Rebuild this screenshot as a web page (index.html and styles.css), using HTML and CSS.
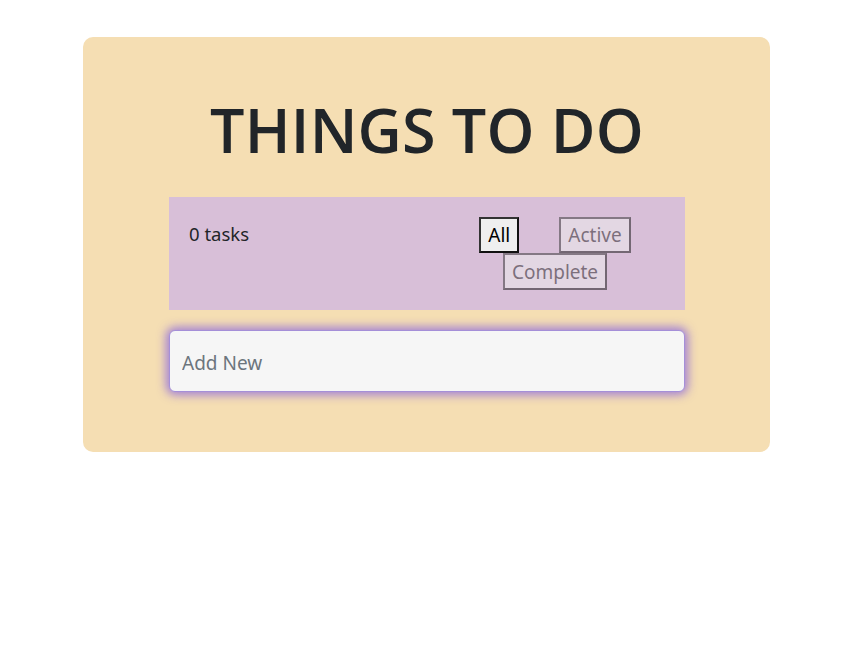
FILE: index.html
```html
<!DOCTYPE html>
<html lang="en">
<head>
<meta charset="utf-8">
<title>Things to do</title>
<link rel="stylesheet" href="styles.css">
</head>
<body>
<main class="card">
  <h1 class="title">THINGS TO DO</h1>
  <section class="status">
    <p class="count">0 tasks</p>
    <div class="filters">
      <button class="filter filter-active" type="button">All</button>
      <button class="filter filter-off" type="button">Active</button>
      <button class="filter filter-off" type="button">Complete</button>
    </div>
  </section>
  <input class="add" type="text" placeholder="Add New">
</main>
</body>
</html>
```
FILE: styles.css
```css
html, body {
  margin: 0;
  padding: 0;
  background: #ffffff;
}
body {
  font-family: "Noto Sans", "Open Sans", sans-serif;
  color: #212529;
}
.card {
  box-sizing: border-box;
  width: 687px;
  height: 415px;
  margin: 37px 0 0 83px;
  padding: 52px 85px 0 86px;
  background: #f5deb3;
  border-radius: 10px;
}
.title {
  margin: 0;
  height: 108px;
  font-family: "Open Sans", "Noto Sans", sans-serif;
  font-size: 61px;
  font-weight: 600;
  line-height: 82px;
  text-align: center;
  color: #212529;
  letter-spacing: 0.2px;
}
.status {
  box-sizing: border-box;
  height: 113px;
  display: flex;
  justify-content: space-between;
  align-items: flex-start;
  padding: 20px 53px 0 20px;
  background: #d8bfd8;
}
.count {
  margin: 0;
  font-size: 18.5px;
  line-height: 33px;
  color: #212529;
}
.filters {
  width: 154px;
  display: flex;
  flex-wrap: wrap;
  justify-content: center;
  column-gap: 40px;
}
.filter {
  box-sizing: border-box;
  height: 36px;
  margin: 0;
  padding: 0 7px;
  font-family: inherit;
  font-size: 19px;
  line-height: 32px;
  background: #efefef;
  color: #000;
  border: 2px solid #111;
  border-top-color: #333;
  border-left-color: #333;
}
.filter-off {
  opacity: 0.5;
  color: #222;
}
.filter-off + .filter-off {
  height: 37px;
}
.add {
  box-sizing: border-box;
  display: block;
  width: 516px;
  height: 62px;
  margin-top: 20px;
  padding: 3px 12px 0;
  font-family: inherit;
  font-size: 19px;
  color: #212529;
  background: #f6f6f6;
  border: 1px solid #a58fd8;
  border-radius: 6px;
  box-shadow: 0 0 10px 3px rgba(147, 112, 219, 0.85);
  outline: none;
}
.add::placeholder {
  color: #6c757d;
}
```
